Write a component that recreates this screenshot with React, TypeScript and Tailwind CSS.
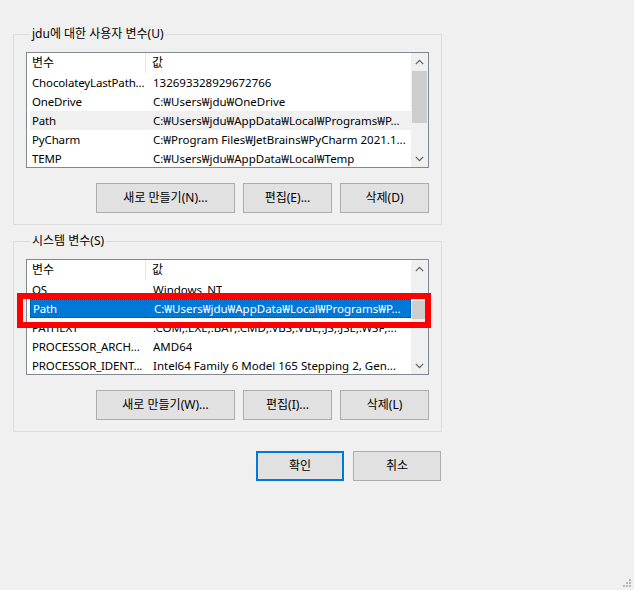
import React from 'react'

type Row = { name: string; value: string; state?: 'hover' | 'selected' }

const FONT = { fontFamily: '"Noto Sans", "Noto Sans CJK KR", sans-serif' }

const userVars: Row[] = [
  { name: 'ChocolateyLastPath...', value: '132693328929672766' },
  { name: 'OneDrive', value: 'C:₩Users₩jdu₩OneDrive' },
  { name: 'Path', value: 'C:₩Users₩jdu₩AppData₩Local₩Programs₩P...', state: 'hover' },
  { name: 'PyCharm', value: 'C:₩Program Files₩JetBrains₩PyCharm 2021.1...' },
  { name: 'TEMP', value: 'C:₩Users₩jdu₩AppData₩Local₩Temp' },
]

const systemVars: Row[] = [
  { name: 'OS', value: 'Windows_NT' },
  { name: 'Path', value: 'C:₩Users₩jdu₩AppData₩Local₩Programs₩P...', state: 'selected' },
  { name: 'PATHEXT', value: '.COM;.EXE;.BAT;.CMD;.VBS;.VBE;.JS;.JSE;.WSF;...' },
  { name: 'PROCESSOR_ARCH...', value: 'AMD64' },
  { name: 'PROCESSOR_IDENT...', value: 'Intel64 Family 6 Model 165 Stepping 2, Gen...' },
]

function Chevron({ down }: { down?: boolean }) {
  return (
    <svg width="9" height="6" viewBox="0 0 9 6" className={down ? 'rotate-180' : ''}>
      <path d="M0.8 5.2 L4.5 1.3 L8.2 5.2" fill="none" stroke="#606060" strokeWidth="1.2" />
    </svg>
  )
}

function Scrollbar({ thumbTop, thumbHeight }: { thumbTop: number; thumbHeight: number }) {
  return (
    <div className="w-[17px] h-full bg-[#f0f0f0] flex flex-col flex-shrink-0">
      <div className="h-[17px] flex items-center justify-center">
        <Chevron />
      </div>
      <div className="flex-1 relative">
        <div
          className="absolute left-[1px] right-[1px] bg-[#cdcdcd]"
          style={{ top: thumbTop, height: thumbHeight }}
        />
      </div>
      <div className="h-[17px] flex items-center justify-center">
        <Chevron down />
      </div>
    </div>
  )
}

function ListView({ rows, thumbTop, thumbHeight }: { rows: Row[]; thumbTop: number; thumbHeight: number }) {
  return (
    <div className="h-[116px] border border-[#828790] bg-white flex overflow-hidden text-[11.5px]">
      <div className="flex-1 min-w-0 overflow-hidden">
        <div className="h-[20px] flex items-center text-[12px]">
          <div className="w-[119px] h-full pl-[5px] flex items-center border-r border-[#e5e5e5]">변수</div>
          <div className="pl-[6px]">값</div>
        </div>
        {rows.map(r => (
          <div
            key={r.name}
            className={
              'h-[19px] ml-[3px] flex items-center whitespace-nowrap ' +
              (r.state === 'selected'
                ? 'bg-[#0078d7] text-white border border-dotted border-[#1b3c66]'
                : r.state === 'hover'
                ? 'bg-[#f0f0f0]'
                : '')
            }
          >
            <div className="w-[116px] flex-shrink-0 pl-[2px] tracking-[-0.15px]">{r.name}</div>
            <div className="pl-[7px] overflow-hidden">{r.value}</div>
          </div>
        ))}
      </div>
      <Scrollbar thumbTop={thumbTop} thumbHeight={thumbHeight} />
    </div>
  )
}

function Button({ children, w, primary }: { children: React.ReactNode; w: string; primary?: boolean }) {
  return (
    <button
      className={
        'h-[30px] bg-[#e1e1e1] flex items-center justify-center text-[12px] text-black ' +
        w +
        (primary ? ' border-2 border-[#0078d7]' : ' border border-[#adadad]')
      }
    >
      {children}
    </button>
  )
}

function Group({ label, children }: { label: string; children: React.ReactNode }) {
  return (
    <fieldset className="border border-[#dcdcdc] px-[12px] pb-[11px] pt-[10px] ml-[13px] w-[429px] min-w-0">
      <legend className="px-[2px] ml-[4px] text-[12px] leading-[16px]">{label}</legend>
      {children}
    </fieldset>
  )
}

export default function App() {
  return (
    <div className="w-[634px] h-[590px] bg-[#f0f0f0] text-[12px] text-black relative" style={FONT}>
      <div className="pt-[26px]">
        <Group label="jdu에 대한 사용자 변수(U)">
          <ListView rows={userVars} thumbTop={1} thumbHeight={52} />
          <div className="flex justify-end gap-[8px] mt-[15px]">
            <Button w="w-[139px]">새로 만들기(N)...</Button>
            <Button w="w-[89px]">편집(E)...</Button>
            <Button w="w-[89px]">삭제(D)</Button>
          </div>
        </Group>
      </div>
      <div className="mt-[8px]">
        <Group label="시스템 변수(S)">
          <ListView rows={systemVars} thumbTop={24} thumbHeight={18} />
          <div className="flex justify-end gap-[8px] mt-[15px]">
            <Button w="w-[139px]">새로 만들기(W)...</Button>
            <Button w="w-[89px]">편집(I)...</Button>
            <Button w="w-[89px]">삭제(L)</Button>
          </div>
        </Group>
      </div>
      <div className="flex justify-end gap-[9px] w-[441px] mt-[19px]">
        <Button w="w-[88px]" primary>확인</Button>
        <Button w="w-[88px]">취소</Button>
      </div>

      {/* annotation box over the selected Path row */}
      <div className="absolute left-[17px] top-[293px] w-[414px] h-[35px] border-[6px] border-[#ff0000]" />

      {/* size grip */}
      <svg className="absolute right-[2px] bottom-[2px]" width="10" height="10" viewBox="0 0 10 10">
        <rect x="7" y="1" width="2" height="2" fill="#b8b8b8" />
        <rect x="4" y="4" width="2" height="2" fill="#b8b8b8" />
        <rect x="7" y="4" width="2" height="2" fill="#b8b8b8" />
        <rect x="1" y="7" width="2" height="2" fill="#b8b8b8" />
        <rect x="4" y="7" width="2" height="2" fill="#b8b8b8" />
        <rect x="7" y="7" width="2" height="2" fill="#b8b8b8" />
      </svg>
    </div>
  )
}
